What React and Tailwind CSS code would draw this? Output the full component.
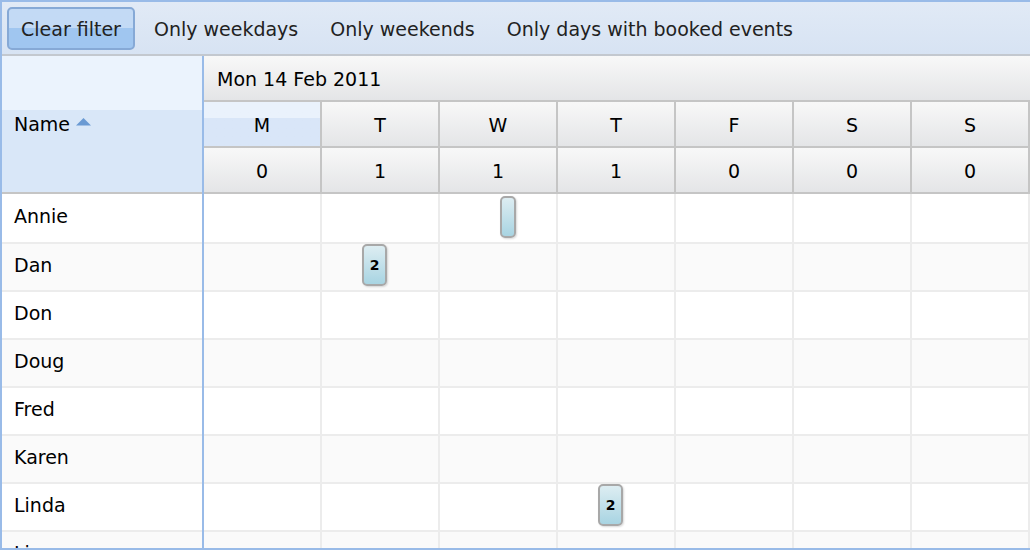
import React from "react";

const days = ["M", "T", "W", "T", "F", "S", "S"];
const counts = [0, 1, 1, 1, 0, 0, 0];
const people = ["Annie", "Dan", "Don", "Doug", "Fred", "Karen", "Linda", "Lisa"];
const events = {
  0: { col: 2, left: 60, width: 16, top: 2, label: "" },
  1: { col: 1, left: 40, width: 25, top: 0, label: "2" },
  6: { col: 3, left: 40, width: 25, top: 0, label: "2" },
};

function EventBar({ ev }) {
  return (
    <div
      className="absolute h-[42px] rounded-[5px] border-2 border-[#a8a8a8] bg-gradient-to-b from-[#ddedf2] to-[#a8d4e2] shadow-[1px_1px_2px_rgba(0,0,0,0.15)] flex items-center justify-center overflow-hidden text-[14px] font-bold text-black leading-none"
      style={{ left: ev.left, width: ev.width, top: ev.top }}
    >
      {ev.label}
    </div>
  );
}

export default function App() {
  return (
    <div
      className="w-[1030px] h-[550px] overflow-hidden border-l-2 border-t-2 border-b-2 border-[#99bbe8] bg-white flex flex-col text-black"
      style={{ fontFamily: '"DejaVu Sans", Verdana, sans-serif' }}
    >
      {/* Toolbar */}
      <div className="h-[54px] shrink-0 border-b-2 border-[#c3c8cf] bg-gradient-to-b from-[#e1eaf6] to-[#d7e3f3] flex items-center gap-[6px] pl-[5px] text-[19px] text-[#222]">
        <div className="h-[43px] px-[12px] pt-[2px] flex items-center rounded-[5px] border-2 border-[#86a9d6] bg-gradient-to-b from-[#c3daf5] from-50% to-[#a0c6f0] to-50%">
          Clear filter
        </div>
        <div className="h-[43px] px-[13px] pt-[2px] flex items-center">Only weekdays</div>
        <div className="h-[43px] px-[13px] pt-[2px] flex items-center">Only weekends</div>
        <div className="h-[43px] px-[13px] pt-[2px] flex items-center">Only days with booked events</div>
      </div>

      {/* Grid */}
      <div className="flex flex-1 min-h-0">
        {/* Locked column */}
        <div className="w-[202px] shrink-0 border-r-2 border-[#99bbe8] flex flex-col">
          <div className="h-[138px] shrink-0 border-b-2 border-[#c5c5c5] flex flex-col">
            <div className="h-[54px] shrink-0 bg-[#ebf3fd]"></div>
            <div className="flex-1 bg-[#d9e7f8] pl-[12px] pt-[2px] text-[19px] leading-[24px] flex items-start">
              <span>Name</span>
              <svg width="15" height="8" viewBox="0 0 15 8" className="ml-[6px] mt-[6px]">
                <polygon points="0,7.5 7.5,0 15,7.5" fill="#6a9ad3" />
              </svg>
            </div>
          </div>
          <div className="flex-1 min-h-0 flex flex-col">
            {people.map((p, i) => (
              <div
                key={p}
                className={`shrink-0 border-b-2 border-[#ececec] flex items-center pl-[12px] pb-[3px] text-[19px] ${
                  i % 2 === 1 ? "bg-[#fafafa]" : "bg-white"
                } ${i === 0 ? "h-[50px]" : "h-[48px]"}`}
              >
                {p}
              </div>
            ))}
          </div>
        </div>

        {/* Schedule */}
        <div className="w-[826px] shrink-0 flex flex-col">
          <div className="h-[138px] shrink-0 border-b-2 border-[#c5c5c5] flex flex-col text-[19px]">
            <div className="h-[46px] shrink-0 border-b-2 border-[#c5c5c5] bg-gradient-to-b from-[#f8f8f8] to-[#e4e5e7] flex items-center pl-[13px] pt-[2px]">
              Mon 14 Feb 2011
            </div>
            <div className="h-[46px] shrink-0 border-b-2 border-[#c5c5c5] flex">
              {days.map((d, i) => (
                <div
                  key={i}
                  className={`w-[118px] shrink-0 border-r-2 border-[#c5c5c5] flex items-center justify-center pt-[2px] ${
                    i === 0
                      ? "bg-gradient-to-b from-[#eaf2fc] from-[36%] to-[#d9e6f8] to-[36%]"
                      : "bg-gradient-to-b from-[#f8f8f8] to-[#e4e5e7]"
                  }`}
                >
                  {d}
                </div>
              ))}
            </div>
            <div className="flex-1 flex">
              {counts.map((c, i) => (
                <div
                  key={i}
                  className="w-[118px] shrink-0 border-r-2 border-[#c5c5c5] bg-gradient-to-b from-[#f8f8f8] to-[#e4e5e7] flex items-center justify-center pt-[2px]"
                >
                  {c}
                </div>
              ))}
            </div>
          </div>
          <div className="flex-1 min-h-0 flex flex-col">
            {people.map((p, i) => (
              <div
                key={p}
                className={`shrink-0 border-b-2 border-[#ececec] flex ${
                  i % 2 === 1 ? "bg-[#fafafa]" : "bg-white"
                } ${i === 0 ? "h-[50px]" : "h-[48px]"}`}
              >
                {days.map((_, c) => (
                  <div key={c} className="relative w-[118px] shrink-0 border-r-2 border-[#ececec]">
                    {events[i] && events[i].col === c && <EventBar ev={events[i]} />}
                  </div>
                ))}
              </div>
            ))}
          </div>
        </div>
      </div>
    </div>
  );
}
